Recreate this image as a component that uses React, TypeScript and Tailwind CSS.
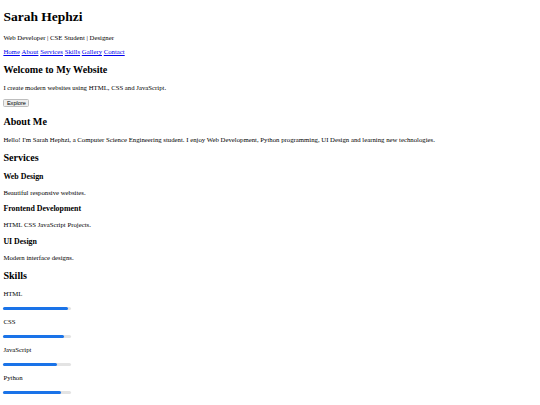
const links = ["Home", "About", "Services", "Skills", "Gallery", "Contact"];

const services = [
  { title: "Web Design", text: "Beautiful responsive websites." },
  { title: "Frontend Development", text: "HTML CSS JavaScript Projects." },
  { title: "UI Design", text: "Modern interface designs." },
];

const skills = [
  { name: "HTML", value: 95 },
  { name: "CSS", value: 90 },
  { name: "JavaScript", value: 80 },
  { name: "Python", value: 85 },
];

const h2 = "my-[8.4px] text-[10.125px] leading-[11.63px] font-bold";
const p = "my-[6.75px]";

function Progress({ value }: { value: number }) {
  return (
    <div className="flex h-[6.75px] w-[67.5px] items-center">
      <div className="h-[3px] w-full rounded-full bg-[#e3e3e3]">
        <div className="h-[3px] rounded-full bg-[#1a73e8]" style={{ width: `${value}%` }} />
      </div>
    </div>
  );
}

export default function App() {
  return (
    <div className="px-[3.375px] font-['Liberation_Serif','Times_New_Roman',serif] text-[6.75px] leading-[7.76px] text-black">
      <header>
        <h1 className="my-[9.05px] text-[13.5px] leading-[15.5px] font-bold">Sarah Hephzi</h1>
        <p className={p}>Web Developer | CSE Student | Designer</p>
        <nav className="flex gap-[1.7px]">
          {links.map((l) => (
            <a key={l} href={`#${l.toLowerCase()}`} className="text-[#0000ee] underline">
              {l}
            </a>
          ))}
        </nav>
      </header>

      <section>
        <h2 className={h2}>Welcome to My Website</h2>
        <p className={p}>I create modern websites using HTML, CSS and JavaScript.</p>
        <div className="h-[8.5px]">
          <button className="h-[8.1px] rounded-[1.5px] border border-[#bdbdbd] bg-[#efefef] px-[2.5px] font-['Liberation_Sans',Arial,sans-serif] text-[5.625px] leading-[6px]">
            Explore
          </button>
        </div>
      </section>

      <section id="about">
        <h2 className={h2}>About Me</h2>
        <p className={p}>
          Hello! I'm Sarah Hephzi, a Computer Science Engineering student. I enjoy Web Development, Python
          programming, UI Design and learning new technologies.
        </p>
      </section>

      <section id="services">
        <h2 className={h2}>Services</h2>
        {services.map((s) => (
          <div key={s.title}>
            <h3 className="my-[7.9px] text-[7.9px] leading-[9.07px] font-bold">{s.title}</h3>
            <p className={p}>{s.text}</p>
          </div>
        ))}
      </section>

      <section id="skills">
        <h2 className={h2}>Skills</h2>
        {skills.map((s) => (
          <div key={s.name}>
            <p className={p}>{s.name}</p>
            <Progress value={s.value} />
          </div>
        ))}
      </section>
    </div>
  );
}
